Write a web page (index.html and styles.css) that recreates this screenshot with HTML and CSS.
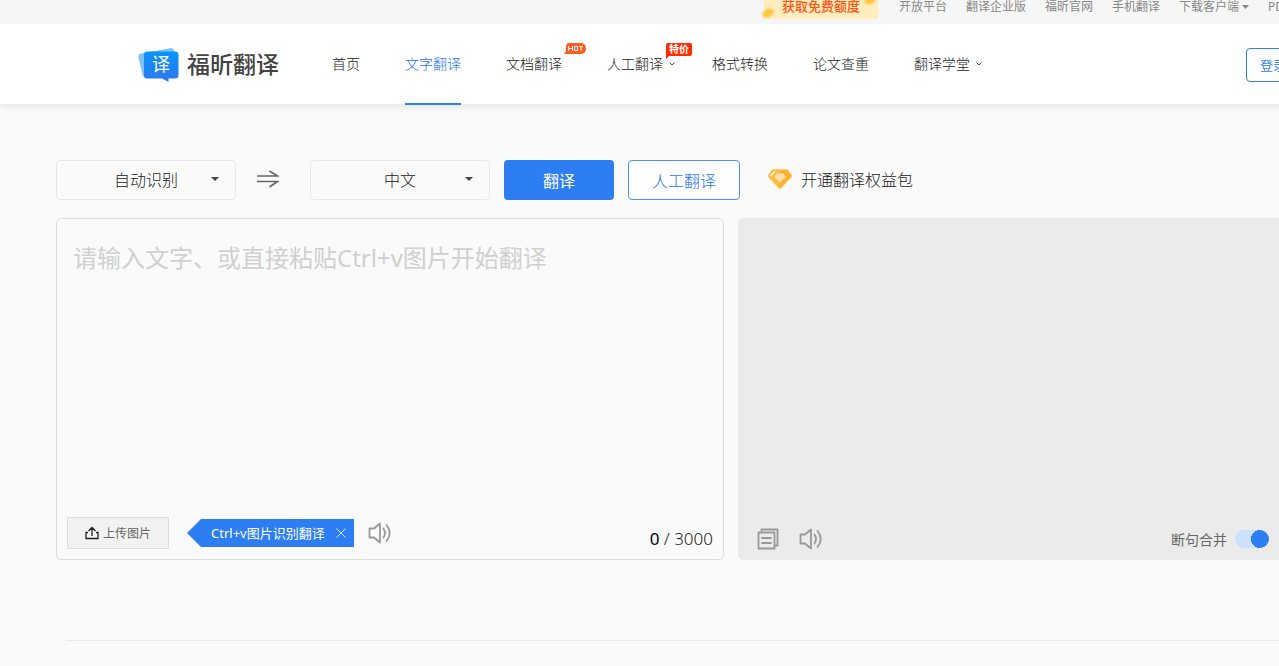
FILE: index.html
```html
<!DOCTYPE html>
<html lang="zh-CN">
<head>
<meta charset="utf-8">
<title>福昕翻译</title>
<link rel="stylesheet" href="styles.css">
</head>
<body>
<div class="page">
  <div class="topbar">
    <a class="promo" href="#">
      <svg class="promo-coin coin-left" viewBox="0 0 16 12" aria-hidden="true"><ellipse cx="8" cy="6" rx="6" ry="4" transform="rotate(-30 8 6)"/></svg>
      <span class="promo-text">获取免费额度</span>
      <svg class="promo-coin coin-right" viewBox="0 0 16 12" aria-hidden="true"><ellipse cx="8" cy="6" rx="6" ry="4" transform="rotate(-20 8 6)"/></svg>
    </a>
    <nav class="toplinks">
      <a href="#">开放平台</a>
      <a href="#">翻译企业版</a>
      <a href="#">福昕官网</a>
      <a href="#">手机翻译</a>
      <a href="#" class="with-caret">下载客户端<svg width="7" height="4" viewBox="0 0 7 4" aria-hidden="true"><path d="M0 0h7L3.500 4z" fill="#888"/></svg></a>
      <a href="#">PDF</a>
    </nav>
  </div>

  <header class="header">
    <a class="logo" href="#">
      <svg width="42" height="36" viewBox="0 0 42 36" aria-hidden="true">
        <defs><linearGradient id="lg" x1="0" y1="0" x2="0" y2="1"><stop offset="0" stop-color="#0a93fb"/><stop offset="1" stop-color="#2f78ee"/></linearGradient></defs>
        <path d="M3 6.500 32 1.200q3-.5 4 1.800l3 7L10 30l-3 0q-2 .2-2.400-2L.400 10Q0 7 3 6.500z" fill="#7ec1fb"/>
        <path d="M9 4.500h28q3.500 0 3.500 3.500v20q0 3.500-3.500 3.500H30.500v3.500l-6.500-3.500H9Q6 31.500 6 28V8q0-3.500 3-3.500z" fill="url(#lg)"/>
        <text x="23" y="24" class="logo-glyph">译</text>
      </svg>
      <span class="logo-name">福昕翻译</span>
    </a>
    <nav class="mainnav">
      <a href="#">首页</a>
      <a href="#" class="active">文字翻译</a>
      <a href="#">文档翻译
        <span class="badge badge-hot"><svg width="22" height="12" viewBox="0 0 22 12" role="img" aria-label="HOT"><path d="M5 0h12a5 5 0 0 1 5 5v1a5 5 0 0 1-5 5H0l2-3V4q0-4 3-4z" fill="#ff5a22"/><path d="M4.500 3v5M8.500 3v5M4.500 5.500h4M10.500 3.500h3v4h-3zM15 3.500h4M17 3.500V8" fill="none" stroke="#fff"/></svg></span>
      </a>
      <a href="#" class="has-menu">人工翻译
        <svg class="chevron" width="6" height="4" viewBox="0 0 6 4" aria-hidden="true"><path d="M.5.500 3 3 5.500.5"/></svg>
        <span class="badge badge-sale">特价</span>
      </a>
      <a href="#">格式转换</a>
      <a href="#">论文查重</a>
      <a href="#" class="has-menu">翻译学堂
        <svg class="chevron" width="6" height="4" viewBox="0 0 6 4" aria-hidden="true"><path d="M.5.500 3 3 5.500.5"/></svg>
      </a>
    </nav>
    <button class="login" type="button">登录</button>
  </header>

  <main class="main">
    <div class="controls">
      <div class="select-wrap">
        <select aria-label="源语言"><option>自动识别</option></select>
        <svg class="arrow" width="8" height="4" viewBox="0 0 8 4" aria-hidden="true"><path d="M0 0h8L4 4z"/></svg>
      </div>
      <button class="swap" type="button" aria-label="交换语言">
        <svg width="22" height="18" viewBox="0 0 22 18" fill="none" stroke="#666" stroke-width="1.700" aria-hidden="true"><path d="M0 6h20.500L12.500 1M0 11.500h20.500L12.500 17"/></svg>
      </button>
      <div class="select-wrap">
        <select aria-label="目标语言"><option>中文</option></select>
        <svg class="arrow" width="8" height="4" viewBox="0 0 8 4" aria-hidden="true"><path d="M0 0h8L4 4z"/></svg>
      </div>
      <button class="btn btn-primary" type="button">翻译</button>
      <button class="btn btn-outline" type="button">人工翻译</button>
      <a class="benefit" href="#">
        <svg width="24" height="20" viewBox="0 0 24 20" aria-hidden="true">
          <path d="M5.500.5h13q1 0 1.600.8L23.600 6q.6 1-.1 1.900L13.200 19q-1.200 1.200-2.400 0L.5 7.900Q-.2 7 .4 6l3.500-4.700Q4.500.5 5.500.5z" fill="#ffb02e"/>
          <path d="M5.500.5h6.500V20q-.7-.2-1.200-1L.5 7.900Q-.2 7 .4 6l3.500-4.700Q4.500.5 5.500.5z" fill="#ffbd45"/>
          <path d="M9 4.500h6.500L18 7.800 12 13.500 6.500 8z" fill="#ffe2ae"/>
          <path d="M3 6.500 6.500 2.500" stroke="#fff" stroke-width="1.200" stroke-linecap="round"/>
        </svg>
        <span>开通翻译权益包</span>
      </a>
    </div>

    <div class="panels">
      <section class="panel source">
        <textarea aria-label="原文" placeholder="请输入文字、或直接粘贴Ctrl+v图片开始翻译"></textarea>
        <div class="tools">
          <button class="upload" type="button">
            <svg width="14" height="14" viewBox="0 0 14 14" fill="none" stroke="#222" stroke-width="1.300" aria-hidden="true"><path d="M3 6.500H1V12.500h12V6.500h-2M7 10V1.500M3.500 5 7 1.500 10.500 5"/></svg>
            <span>上传图片</span>
          </button>
          <div class="tip">
            <span>Ctrl+v图片识别翻译</span>
            <button type="button" aria-label="关闭"><svg width="10" height="10" viewBox="0 0 10 10" aria-hidden="true"><path d="M.5.5l9 9M9.500.5l-9 9" stroke="#d5e5fd"/></svg></button>
          </div>
          <button class="icon-btn" type="button" aria-label="朗读原文">
            <svg width="24" height="22" viewBox="0 0 24 22" aria-hidden="true"><path d="M1.500 6.500H6L12 1.500V20.500L6 15.500H1.500zM15.500 6.500q3 4.500 0 9M18.500 3q6.500 8 0 16"/></svg>
          </button>
          <div class="count"><b>0</b> / 3000</div>
        </div>
      </section>
      <section class="panel result">
        <div class="output"></div>
        <div class="tools">
          <button class="icon-btn" type="button" aria-label="复制">
            <svg width="22" height="22" viewBox="0 0 22 22" aria-hidden="true"><path d="M1.500 4.500h16v16h-16zM4.500 4V1.500h16v16H18M5 10h9M5 15h9"/></svg>
          </button>
          <button class="icon-btn" type="button" aria-label="朗读译文">
            <svg width="24" height="22" viewBox="0 0 24 22" aria-hidden="true"><path d="M1.500 6.500H6L12 1.500V20.500L6 15.500H1.500zM15.500 6.500q3 4.500 0 9M18.500 3q6.500 8 0 16"/></svg>
          </button>
          <label class="switch">断句合并<input type="checkbox" role="switch" checked></label>
        </div>
      </section>
    </div>
    <hr class="divider">
  </main>
</div>
</body>
</html>
```

FILE: styles.css
```css
* { box-sizing: border-box; }

body {
  margin: 0;
  overflow: hidden;
  background: #fafafa;
  color: #333;
  font-family: "Noto Sans", "Noto Sans CJK SC", sans-serif;
  font-size: 14px;
}

a { color: inherit; text-decoration: none; }

button, select, textarea { font: inherit; color: inherit; }

button { padding: 0; border: 0; background: none; cursor: pointer; }

svg { display: block; flex: none; }

.page { min-width: 1462px; min-height: 100vh; }

/* top strip */
.topbar {
  display: flex;
  align-items: flex-start;
  gap: 21px;
  height: 24px;
  padding-left: 764px;
  background: #f6f6f6;
  color: #888;
  font-size: 12px;
  line-height: 14px;
  white-space: nowrap;
}

.promo {
  position: relative;
  width: 114px;
  height: 19px;
  background: #ffedbd;
  color: #ff5310;
  font-size: 13px;
  font-weight: 500;
  line-height: 12px;
  text-align: center;
}

.promo-text { position: relative; }

.promo-coin {
  position: absolute;
  width: 16px;
  height: 12px;
  fill: #ffc53d;
  filter: blur(1px);
}

.coin-left { left: -4px; bottom: 0; }
.coin-right { right: 0; top: -6px; }

.toplinks { display: flex; gap: 19px; }

.with-caret { display: flex; align-items: center; gap: 3px; }

/* main header */
.header {
  position: relative;
  display: flex;
  align-items: center;
  height: 80px;
  padding: 0 162px 0 138px;
  background: #fff;
  box-shadow: 0 4px 6px rgba(0, 0, 0, .07);
  white-space: nowrap;
}

.logo { display: flex; align-items: center; gap: 7px; width: 194px; margin-top: 2px; }

.logo-glyph { fill: #fff; font-size: 18px; text-anchor: middle; }

.logo-name { padding-bottom: 2px; color: #444; font-size: 23px; font-weight: 500; line-height: 32px; }

.mainnav { display: flex; align-self: flex-start; gap: 45px; color: #222; font-weight: 300; }

.mainnav a {
  position: relative;
  height: 81px;
  border-bottom: 2px solid transparent;
  line-height: 80px;
}

.mainnav .active { border-color: #2d7df3; color: #1f74f2; }

.mainnav .has-menu {
  display: flex;
  align-items: center;
  gap: 6px;
  margin-right: -8px;
}

.chevron { fill: none; stroke: #444; }

.badge { position: absolute; }

.badge-hot { top: 19px; right: -24px; }

.badge-sale {
  top: 19px;
  left: 59px;
  padding: 0 3px;
  border-radius: 2px 2px 2px 0;
  background: #ff2c00;
  color: #fff;
  font-size: 10px;
  font-weight: 700;
  line-height: 13px;
}

.badge-sale::after {
  content: "";
  position: absolute;
  top: 100%;
  left: 0;
  border-top: 3px solid #ff2c00;
  border-right: 3px solid transparent;
}

.login {
  height: 34px;
  margin: 2px 0 0 auto;
  padding: 0 13px 2px;
  border: 1px solid #2d7df3;
  border-radius: 4px;
  color: #2d7df3;
  font-size: 13px;
}

/* translator */
.main { padding: 56px 56px 24px; }

.controls {
  display: flex;
  align-items: center;
  margin-bottom: 18px;
  color: #222;
  font-size: 16px;
  font-weight: 300;
}

.select-wrap { position: relative; }

.select-wrap select {
  display: block;
  width: 180px;
  height: 40px;
  padding: 0;
  border: 1px solid #e6e6e6;
  border-radius: 4px;
  appearance: none;
  background: #fafafa;
  text-align-last: center;
}

.arrow {
  position: absolute;
  top: 17px;
  right: 17px;
  fill: #444;
  pointer-events: none;
}

.swap { margin: 0 31px 2px 21px; }

.btn { height: 40px; margin-left: 14px; border-radius: 4px; }

.btn-primary { width: 110px; background: #2d7df3; color: #fff; font-weight: 400; }

.btn-outline {
  width: 112px;
  border: 1px solid #4a90f5;
  background: #fff;
  color: #1f74f2;
}

.benefit {
  display: flex;
  align-items: center;
  gap: 9px;
  margin: 0 0 2px 28px;
}

.panels { display: grid; grid-template-columns: 1fr 1fr; gap: 14px; }

.panel {
  display: flex;
  flex-direction: column;
  min-height: 342px;
  border: 1px solid #ddd;
  border-radius: 5px;
}

.panel textarea {
  flex: 1;
  padding: 20px 16px;
  border: 0;
  outline: 0;
  resize: none;
  background: none;
  font-size: 24px;
  line-height: 38px;
}

.panel textarea::placeholder { color: #d0d0d0; opacity: 1; }

.tools { display: flex; align-items: center; height: 52px; padding: 0 10px; }

.result { border-color: #ebebeb; background: #ebebeb; }

.output { flex: 1; }

.upload {
  display: flex;
  align-items: center;
  justify-content: center;
  gap: 4px;
  width: 102px;
  height: 32px;
  border: 1px solid #ddd;
  background: #f2f2f2;
  color: #666;
  font-size: 12px;
}

.tip {
  display: flex;
  align-items: center;
  justify-content: space-between;
  width: 167px;
  height: 28px;
  margin: 0 14px 0 18px;
  padding: 0 8px 0 24px;
  clip-path: polygon(0 50%, 14px 0, 100% 0, 100% 100%, 14px 100%);
  background: #2d7df3;
  color: #fff;
  font-size: 13px;
  line-height: 20px;
  white-space: nowrap;
}

.icon-btn svg { fill: none; stroke: #999; stroke-width: 1.8; stroke-linejoin: round; stroke-linecap: round; }

.count { margin-left: auto; padding-top: 12px; color: #222; font-size: 17px; font-weight: 300; line-height: 20px; }

.count b { color: #000; font-weight: 400; }

.result .tools { gap: 20px; height: 40px; padding: 0 136px 0 18px; }

.switch {
  display: flex;
  align-items: center;
  gap: 8px;
  margin-left: auto;
  color: #666;
}

.switch input {
  width: 34px;
  height: 18px;
  margin: 0;
  border-radius: 9px;
  appearance: none;
  background: radial-gradient(circle at 25px 9px, #2d7df3 8px, #2d7df3 9px, #cce0ff 9px);
}

.divider { margin: 80px 0 0 10px; border: 0; border-top: 1px solid #e8e8e8; }
```
